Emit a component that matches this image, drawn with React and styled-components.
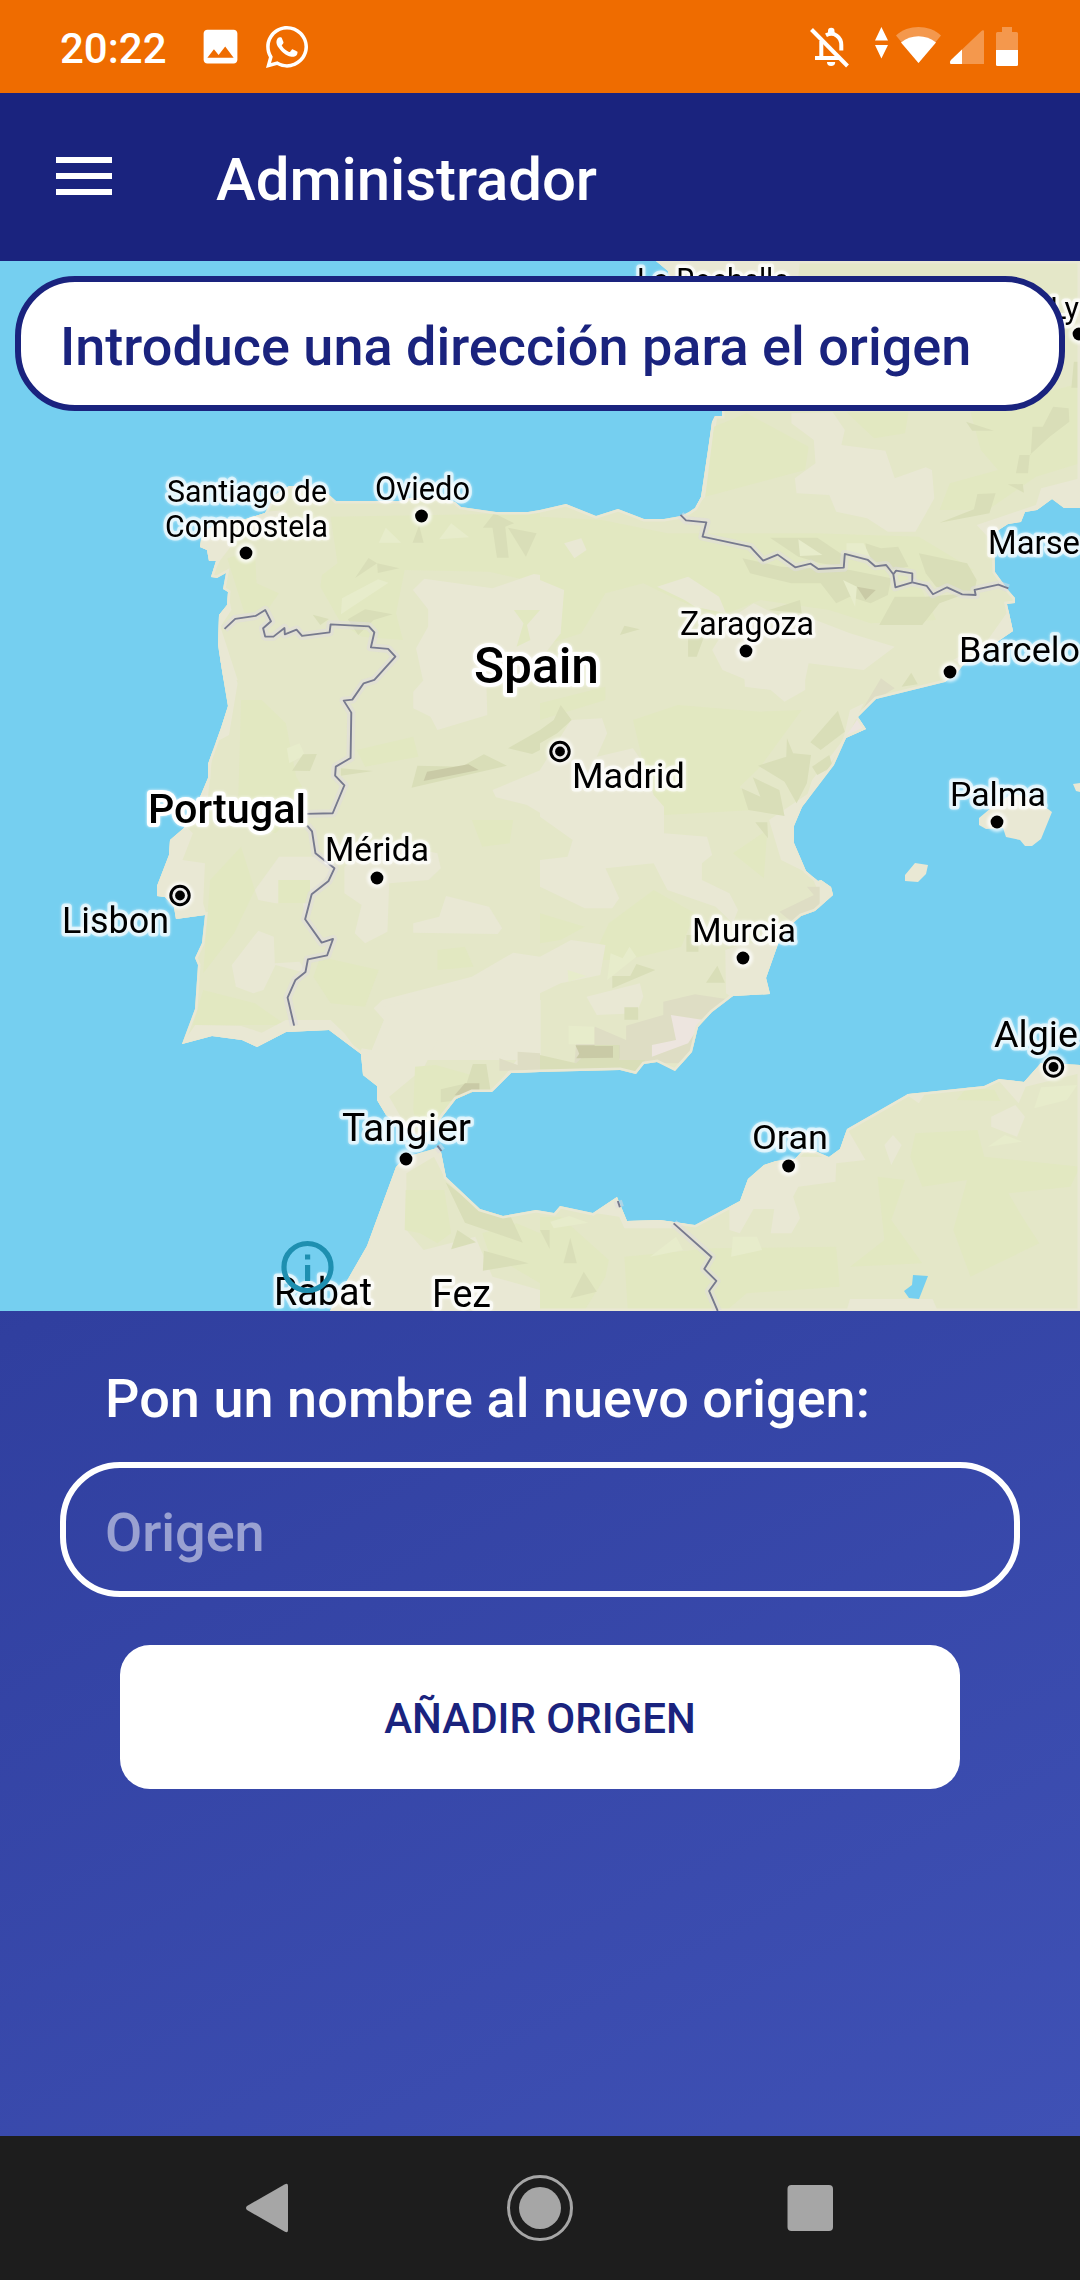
import React from "react";
import styled, { createGlobalStyle } from "styled-components";
import { FaWhatsapp } from "react-icons/fa";
import { MdImage } from "react-icons/md";

const GlobalStyle = createGlobalStyle`
  * { box-sizing: border-box; }
  body { margin: 0; font-family: Roboto, "Noto Sans", sans-serif; }
`;

const Screen = styled.div`
  width: 1080px;
  height: 2280px;
  display: flex;
  flex-direction: column;
  overflow: hidden;
  background: linear-gradient(153.18deg, #1a237e 0%, #303f9f 50%, #3f51b5 100%) 0 0 / 1080px 2136px no-repeat;
`;

const StatusBar = styled.header`
  height: 93px;
  flex: none;
  display: flex;
  align-items: flex-start;
  justify-content: space-between;
  padding: 0 60px;
  background: #ef6c00;
  color: #fff;
`;

const StatusLeft = styled.div`
  display: flex;
  align-items: center;
  height: 93px;
`;

const Clock = styled.span`
  width: 138px;
  font-size: 42px;
  font-weight: 500;
  line-height: 50px;
  padding-top: 4px;
`;

const ImageIcon = styled(MdImage)`
  font-size: 45px;
  margin-right: 20px;
`;

const ChatIcon = styled(FaWhatsapp)`
  font-size: 48px;
`;

const StatusIcons = styled.svg`
  width: 210px;
  height: 93px;
`;

const AppBar = styled.nav`
  height: 168px;
  flex: none;
  display: flex;
  align-items: center;
  padding-left: 56px;
  background: #1a237e;
`;

const MenuButton = styled.button`
  width: 56px;
  height: 38px;
  padding: 0;
  border: 0;
  background: none;
  display: flex;
  flex-direction: column;
  justify-content: space-between;
  margin-right: 104px;
  margin-bottom: 2px;
`;

const MenuLine = styled.span`
  height: 6px;
  background: #fff;
`;

const Title = styled.h1`
  margin: 0;
  font-size: 60px;
  font-weight: 500;
  line-height: 70px;
  letter-spacing: -0.1px;
  padding-top: 5px;
  color: #fff;
`;

const MapPanel = styled.section`
  position: relative;
  height: 1050px;
  flex: none;
  background: #75cff0;
`;

const MapCanvas = styled.svg`
  display: block;
  width: 1080px;
  height: 1050px;
`;

const Field = styled.input`
  height: 135px;
  border: 6px solid ${(p) => p.$tone};
  border-radius: 60px;
  background: ${(p) => p.$fill};
  color: ${(p) => p.$tone};
  padding: 5px 39px 0;
  font-family: Roboto, sans-serif;
  font-size: 54px;
  font-weight: 500;
  outline: none;
  &::placeholder {
    color: ${(p) => p.$hint};
    opacity: 1;
  }
`;

const SearchField = styled(Field)`
  position: absolute;
  top: 15px;
  left: 15px;
  width: 1050px;
`;

const Form = styled.form`
  flex: 1;
  display: flex;
  flex-direction: column;
  padding: 56px 60px 0;
`;

const Label = styled.label`
  padding-left: 45px;
  font-size: 54px;
  font-weight: 500;
  line-height: 64px;
  letter-spacing: 0.05px;
  color: #fff;
  margin-bottom: 31px;
`;

const AddButton = styled.button`
  height: 144px;
  margin: 48px 60px 0;
  border: 0;
  border-radius: 30px;
  background: #fff;
  color: #1a237e;
  font-family: Roboto, sans-serif;
  font-size: 42px;
  font-weight: 500;
  padding: 3px 0 0;
`;

const NavBar = styled.footer`
  height: 144px;
  flex: none;
  display: flex;
  align-items: center;
  justify-content: center;
  gap: 202px;
  background: #1d1d1d;
`;

const NavIcon = styled.svg`
  width: 68px;
  height: 68px;
  fill: #a6a6a6;
`;

const CityText = styled.text`
  font-family: Roboto, "Noto Sans", sans-serif;
  font-size: ${(p) => p.$size}px;
  font-weight: ${(p) => (p.$country ? 500 : 400)};
  fill: #000;
  stroke: ${(p) => (p.$country ? "#fff" : "rgba(255,255,255,0.62)")};
  stroke-width: ${(p) => (p.$country ? 8 : 7)}px;
  stroke-linejoin: round;
  paint-order: stroke;
  filter: drop-shadow(0 0 1.5px rgba(255, 255, 255, 0.8));
`;

const Halo = styled.circle`
  fill: rgba(255, 255, 255, 0.75);
  filter: blur(1.5px);
`;

const IBERIA =
  "M656 261L668 271L670 280L722 411L722 416L715 416L712 422L708 450L701 497L695 508L689 512L681 516L664 519L644 519L618 509L596 516L566 504L540 510L528 512L496 512L461 507L455 502L440 498L410 498L400 501L336 501L327 493L310 487L289 486L275 495L265 513L246 519L225 519L207 530L201 540L200 547L207 550L209 561L216 561L211 577L217 578L226 573L223 589L228 592L227 605L219 615L218 645L222 670L228 706L221 728L208 764L208 778L200 797L184 828L170 840L169 855L157 886L157 896L165 897L174 907L176 919L205 915L202 943L195 958L198 965L195 1009L182 1044L212 1036L242 1040L257 1047L286 1032L329 1030L361 1054L363 1075L377 1086L377 1100L386 1115L396 1123L418 1136L434 1128L442 1117L456 1099L472 1092L492 1092L511 1073L540 1072L620 1070L636 1074L644 1064L657 1062L675 1071L692 1052L698 1027L712 1012L733 996L770 994L766 978L778 944L793 923L801 916L815 911L833 895L831 887L821 880L818 881L806 871L794 843L794 826L802 807L834 765L846 738L866 729L858 717L876 699L945 682L957 673L963 665L1013 631L1007 604L1015 603L1015 598L1008 590L995 572L994 533L1008 524L1021 522L1025 512L1037 510L1052 499L1064 508L1080 508L1080 261Z";
const AFRICA =
  "M330 1311L348 1279L367 1246L396 1167L406 1157L437 1148L441 1152L446 1177L480 1209L503 1216L536 1210L554 1213L560 1206L593 1213L617 1197L627 1221L660 1220L695 1225L740 1201L748 1179L764 1165L776 1161L795 1159L803 1150L815 1151L829 1157L840 1149L847 1129L908 1094L984 1086L999 1079L1024 1082L1041 1063L1080 1065L1080 1311Z";
const ISLANDS =
  "M979 818L991 808L1013 793L1036 800L1052 812L1041 839L1032 846L1025 846L1020 840L1006 837L1003 828L986 829L979 825Z M905 875L915 863L928 865L926 874L918 882L905 881Z M1073 784L1080 783L1080 792L1076 791Z";
const LAKE = "M913 1275L928 1276L919 1299L909 1298L904 1291L912 1285Z";

const SAND = "#e9e8d4";
const GREEN = "#e2e8c1";
const PALE = "#e7eccb";
const HILL = "#d9deb8";
const RIDGE = "#c9caa6";
const DUSK = "#deddc4";
const ROSE = "#ede5df";

const TILES = [
  {
    x: 0,
    y: 250,
    shapes: [
      [SAND, "560,805 830,780 780,830 700,850 640,930 610,990 560,990"],
      [GREEN, "960,800 1568,790 1568,1000 1420,965 1175,960 1150,1090 1170,1170 1050,1160 990,1120 930,1010 935,975 980,940"],
      [GREEN, "660,925 740,900 745,1000 810,1030 770,1090 710,1090"],
      [SAND, "1199,1020 1232,986 1430,1015 1550,972 1570,975 1570,1290 1228,1290 1208,1195 1243,1130 1243,1078"],
      [SAND, "630,1095 661,1020 672,1080 640,1130 690,1290 640,1290"],
      [GREEN, "1492,1080 1568,1080 1530,1125 1540,1170 1500,1190 1520,1120"],
      [PALE, "993,1045 1098,988 1128,998 990,1093"],
      [PALE, "1120,833 1165,878 1100,878"],
      [PALE, "1310,820 1362,862 1275,868"],
      [HILL, "1095,940 1160,955 1097,969"],
      [HILL, "1070,924 1095,940 1031,984"],
      [HILL, "1217,825 1230,878 1198,878"],
      [HILL, "1435,790 1493,820 1467,830 1477,923 1443,923 1430,833 1402,833"],
      [HILL, "1475,833 1558,850 1527,920"],
      [HILL, "908,1094 955,1107 930,1125"],
      [HILL, "1060,1078 1140,1093 1085,1110 1040,1155 1010,1108"],
    ],
  },
  {
    x: 540,
    y: 250,
    shapes: [
      [SAND, "330,33 755,33 750,80 330,80"],
      [SAND, "500,500 515,497 480,740 450,773 434,787 467,740"],
      [GREEN, "505,530 600,490 780,590 770,660 480,740"],
      [GREEN, "890,487 1070,487 1060,550 970,565"],
      [SAND, "730,490 850,487 885,540 875,585 1003,602 1030,685 1120,652 1138,660 1145,745 1115,800 1090,845 1010,845 950,805 860,785 840,735 745,730 740,685 800,640 795,570 730,520"],
      [GREEN, "1250,487 1568,400 1568,640 1440,680 1300,780 1160,780 1190,700 1330,660 1280,600"],
      [GREEN, "0,800 180,810 370,850 800,850 1100,860 1260,960 1100,1000 1150,1110 960,1120 840,1080 640,1050 520,1100 400,1050 300,1000 190,1030 120,1150 0,1190"],
      [SAND, "70,880 120,865 135,900 100,925"],
      [SAND, "0,990 70,1020 60,1150 0,1230"],
      [SAND, "1268,825 1440,765 1455,715 1568,685 1568,773 1522,773 1488,748 1445,780 1408,787 1397,815 1360,822 1320,850 1320,925 1300,860"],
      [SAND, "340,1010 430,980 520,1040 540,1090 450,1070 420,1050"],
      [SAND, "560,1100 620,1060 700,1100 800,1110 900,1150 1030,1190 940,1260 780,1240 770,1290 600,1290 530,1260 500,1200"],
      [SAND, "1375,1060 1385,1143 1228,1245 1200,1230 1300,1170"],
      [HILL, "1490,470 1535,475 1537,515 1480,560 1422,615 1417,670 1382,670 1392,615 1425,615 1430,530 1460,530"],
      [HILL, "1237,515 1318,542 1255,542"],
      [HILL, "1270,732 1323,730 1305,790 1160,818 1260,778"],
      [HILL, "1550,335 1568,335 1568,413 1543,413"],
      [HILL, "1358,703 1402,702 1405,728"],
      [HILL, "668,863 805,863 880,915 880,950 815,940 750,920"],
      [HILL, "588,925 700,950 900,960 1020,985 1010,1035 960,1060 900,1040 860,1060 815,1000 730,1000 610,970"],
      [HILL, "1100,910 1240,940 1268,990 1260,1035 1150,1010 1120,970"],
      [HILL, "985,1125 1030,1040 1120,1040 1240,1030 1160,1060 1110,1125"],
      [HILL, "945,880 990,895 1040,890 1070,950 1010,960 950,920"],
      [PALE, "750,868 820,915 755,918"],
      [PALE, "880,990 920,1010 915,1070"],
      [PALE, "890,880 940,880 960,925 890,905"],
      [RIDGE, "920,1010 975,1020 945,1050"],
      [HILL, "755,1050 760,1090 665,1080"],
      [HILL, "245,1127 290,1138 232,1155"],
      [HILL, "430,1160 480,1150 455,1220 430,1220"],
    ],
  },
  {
    x: 0,
    y: 660,
    shapes: [
      [SAND, "630,0 665,0 690,70 665,225 620,250 603,420 560,420 590,312 650,138"],
      [SAND, "536,495 560,520 530,600 595,610 590,730 600,766 510,785 450,707 450,678 480,585 485,540"],
      [GREEN, "700,120 760,120 830,190 860,350 900,420 800,520 690,480"],
      [GREEN, "610,660 700,560 740,690 680,820 590,940"],
      [GREEN, "590,990 740,1030 830,1095 760,1095 560,1095"],
      [GREEN, "930,890 1100,930 1060,1040 960,1030 910,950"],
      [GREEN, "1035,270 1200,230 1215,290 1060,320"],
      [GREEN, "1370,480 1490,480 1480,550 1400,560"],
      [GREEN, "1270,870 1350,860 1375,920 1270,930"],
      [SAND, "740,690 810,590 915,590 970,625 905,703 886,778 880,730 800,730 750,720"],
      [GREEN, "808,660 900,660 900,730 808,730"],
      [SAND, "673,915 750,812 795,830 798,910 870,905 890,940 800,915 765,990 735,1000 685,980"],
      [SAND, "1200,95 1230,60 1225,0 1410,0 1415,165 1270,210 1250,170 1200,145"],
      [SAND, "1130,670 1245,660 1280,625 1270,580 1130,550 1000,620 1000,700 1050,735 1030,820 1060,850 1125,815"],
      [SAND, "1200,790 1275,770 1295,708 1420,740 1458,805 1445,822 1200,818"],
      [SAND, "1430,390 1570,330 1570,460 1530,435 1440,412"],
      [SAND, "1085,1045 1110,1020 1370,950 1490,878 1568,890 1568,1200 1040,1200 1050,1165 1080,1170 1115,1080"],
      [SAND, "528,1152 567,1095 700,1098 760,1118 830,1080 960,1080 1000,1120 1050,1190 957,1120 830,1126 747,1171"],
      [PALE, "833,265 870,250 885,285 840,310"],
      [HILL, "880,283 920,282 900,333 848,332"],
      [HILL, "990,325 1083,333 990,347"],
      [HILL, "1212,317 1340,320 1405,283 1472,317 1195,383"],
      [RIDGE, "1360,313 1390,330 1230,363 1240,335"],
      [HILL, "1475,265 1568,210 1568,270 1545,282"],
    ],
  },
  {
    x: 540,
    y: 660,
    shapes: [
      [GREEN, "270,180 400,135 640,155 760,150 640,320 580,380 620,450 360,465 330,405 300,310"],
      [GREEN, "560,580 660,510 650,655"],
      [GREEN, "200,790 330,690 450,760 410,860 250,900 150,900"],
      [GREEN, "0,130 190,80 190,120 0,180"],
      [GREEN, "0,760 130,800 60,840 0,850"],
      [SAND, "0,330 90,180 180,175 195,220 165,290 270,265 300,310 330,405 360,440 360,520 485,530 500,585 470,610 470,660 550,700 575,750 560,790 510,740 370,690 330,610 190,625 230,715 210,745 130,745 0,680 0,600 80,590 95,540 0,470"],
      [SAND, "590,0 770,0 770,90 710,125 670,90 595,80"],
      [SAND, "0,890 90,840 190,855 175,945 60,970 0,1000"],
      [SAND, "135,1010 290,970 300,1010 280,1060 165,1065"],
      [SAND, "538,870 600,850 700,853 668,955 677,1003 560,1015 540,1000"],
      [SAND, "665,480 780,400 737,498 739,550 782,642 700,600"],
      [SAND, "765,440 850,300 890,235 940,130 900,150 880,240 790,360"],
      [SAND, "790,650 850,670 860,706 800,762 810,700"],
      [DUSK, "358,1025 450,1003 560,1020 480,1090 440,1170 420,1210 100,1210 105,1150 160,1100 250,1140 250,1097 358,1065"],
      [DUSK, "695,755 795,705 775,680 812,680 812,745 757,778 735,790"],
      [PALE, "83,1097 158,1100 158,1153 83,1153"],
      [PALE, "205,880 240,895 260,860 280,890 195,960"],
      [PALE, "80,930 135,948 83,965"],
      [ROSE, "380,1065 475,1080 430,1150 325,1190 325,1155 395,1140"],
      [ROSE, "885,235 925,172 950,208"],
      [RIDGE, "103,1156 230,1156 230,1195 120,1195"],
      [HILL, "0,250 0,210 40,180 60,135 92,180 50,220"],
      [HILL, "633,317 715,290 717,235 735,280 787,285 775,370 745,430 710,365"],
      [HILL, "785,247 865,152 885,215 815,270"],
      [HILL, "790,320 840,285 850,320 805,345"],
      [HILL, "585,385 640,410 618,352 695,390 710,468 605,450"],
      [HILL, "625,487 660,487 662,535"],
      [DUSK, "935,150 990,55 1030,85 960,128"],
      [HILL, "1050,80 1078,38 1097,73"],
      [HILL, "425,825 460,825 460,875 425,875"],
      [HILL, "280,912 335,930 210,985 210,948 262,948"],
      [HILL, "515,917 537,968 482,968"],
      [HILL, "245,1042 285,1042 285,1079 245,1079"],
    ],
  },
  {
    x: 0,
    y: 1000,
    shapes: [
      [SAND, "1040,162 1080,150 1115,60 1110,20 1200,0 1570,0 1570,220 1430,275 1500,180 1440,160 1280,100 1230,205 1130,290 1180,380 1120,365 1080,300 1085,258 1044,224"],
      [GREEN, "1205,200 1265,195 1420,240 1390,275 1325,296 1262,385 1215,405 1200,330"],
      [HILL, "1373,192 1412,192 1427,290 1280,307 1280,268 1355,250"],
      [RIDGE, "1350,250 1392,250 1392,282 1320,286"],
      [DUSK, "1450,175 1503,195 1503,155 1568,160 1568,212 1450,212"],
      [SAND, "950,933 1055,738 1140,490 1280,440 1300,550 1260,470 1180,520 1180,690 1230,750 1380,710 1430,830 1568,870 1568,933"],
      [GREEN, "1178,570 1290,570 1310,700 1270,730 1220,700 1175,690"],
      [GREEN, "1400,700 1500,670 1568,700 1568,850 1420,760"],
      [HILL, "1294,547 1395,630 1483,650 1518,728 1350,668"],
      [HILL, "1328,690 1382,727 1310,748"],
      [HILL, "1405,752 1535,790 1402,812"],
    ],
  },
  {
    x: 540,
    y: 1000,
    shapes: [
      [HILL, "0,165 105,190 160,135 230,135 230,180 305,180 278,222 232,210 0,215"],
      [RIDGE, "105,175 130,138 212,138 212,173"],
      [GREEN, "0,650 60,650 200,780 190,830 130,930 0,933"],
      [GREEN, "245,770 500,745 860,740 870,860 600,880 540,933 255,933"],
      [GREEN, "1090,400 1270,390 1290,470 1568,500 1540,560 1360,580 1400,650 1450,730 1250,830 1200,690 1240,540 1110,560 1075,470"],
      [GREEN, "980,530 1060,540 1020,660 1110,790 900,800 1000,720"],
      [GREEN, "1210,300 1240,262 1320,270 1337,303"],
      [SAND, "550,615 595,537 650,490 740,470 840,471 893,388 945,480 860,490 858,545 750,560 735,590 755,655 730,700 670,700 680,627 620,627 580,700 550,690"],
      [SAND, "900,897 1140,897 1155,933 890,933"],
      [SAND, "1330,240 1407,240 1455,185 1568,190 1568,220 1410,260 1390,310"],
      [SAND, "1310,350 1380,315 1408,350 1385,410 1310,380"],
      [SAND, "1000,435 1025,405 1050,435 1020,495"],
      [SAND, "1060,281 1120,278 1100,310"],
      [SAND, "153,638 223,585 252,655 430,665 400,685 245,685 230,650"],
      [PALE, "1300,440 1350,405 1400,425"],
      [PALE, "560,710 630,710 645,750 555,770"],
      [PALE, "320,770 395,710 415,750"],
      [PALE, "30,665 85,648 140,668 40,685"],
      [PALE, "1435,325 1455,262 1560,255 1530,300"],
      [HILL, "88,713 107,790 68,790"],
      [HILL, "127,815 165,875 88,895"],
      [HILL, "0,690 28,690 28,747"],
    ],
  },
];

const BORDERS = [
  [0, 250, "652,1137 683,1107 742,1098 770,1080 787,1114 764,1135 770,1160 794,1160 826,1134 827,1153 861,1139 877,1158 957,1147 960,1123 1071,1129 1087,1147 1077,1192 1127,1197 1148,1220 1087,1290 1056,1300 1023,1349 998,1352 1020,1388 1018,1524 975,1550 973,1577 1000,1606 966,1690 885,1692"],
  [0, 660, "892,497 906,514 916,580 971,625 954,663 905,703 886,778 934,848 967,837 950,886 894,898 887,936 858,960 835,1013 854,1097"],
  [540, 250, "408,795 424,811 483,817 472,860 611,891 648,932 690,914 741,952 786,941 808,957 882,953 885,912 952,930 973,949 1005,945 1026,973 1034,962 1081,970 1081,997 1032,1012 1026,973"],
  [540, 250, "1081,997 1123,1008 1141,1033 1182,1012 1226,1033 1265,1035 1262,1020 1331,1004 1360,1015"],
  [540, 1000, "388,670 498,771 477,807 512,843 491,873 516,933"],
  [0, 1000, "1270,437 1282,453"],
  [540, 1000, "226,603 232,622"],
];

// name, left, baseline, width, font size, country flag
const LABELS = [
  ["La Rochelle", 637, 292, 152, 33],
  ["Ly", 1050, 319, 29, 32],
  ["Santiago de", 167, 502, 160, 32],
  ["Compostela", 165, 537, 163, 32],
  ["Oviedo", 375, 500, 95, 33],
  ["Marse", 988, 554, 92, 33.5],
  ["Zaragoza", 680, 635, 134, 33.5],
  ["Barcelo", 959, 662, 121, 35],
  ["Spain", 474, 683, 125, 50, true],
  ["Madrid", 572, 788, 113, 35],
  ["Portugal", 148, 823, 158, 41, true],
  ["Palma", 950, 806, 96, 33],
  ["Mérida", 325, 861, 104, 33],
  ["Lisbon", 62, 933, 107, 36],
  ["Murcia", 692, 942, 104, 34],
  ["Algie", 994, 1047, 84, 37],
  ["Tangier", 342, 1141, 129, 38],
  ["Oran", 752, 1149, 76, 34],
  ["Rabat", 274, 1305, 98, 38],
  ["Fez", 432, 1307, 59, 38],
];

const DOTS = [
  [246, 553], [421.5, 516], [746, 651], [950, 672], [377, 878], [997, 822],
  [743, 958], [788.6, 1166], [406, 1159], [1079, 334],
];
const CAPITALS = [[560, 751.5], [180, 895.5], [1053.5, 1067]];

const tileTransform = (x, y) => `translate(${x} ${y}) scale(0.3444 0.3333)`;

function IberiaMap() {
  return (
    <MapCanvas viewBox="0 261 1080 1050">
      <defs>
        <clipPath id="land">
          <path d={IBERIA} />
          <path d={AFRICA} />
        </clipPath>
      </defs>
      <path d={`${IBERIA} ${AFRICA}`} fill="#e4e7c8" />
      <path d={ISLANDS} fill={SAND} />
      <g clipPath="url(#land)">
        {TILES.map((tile, t) => (
          <g key={t} transform={tileTransform(tile.x, tile.y)}>
            {tile.shapes.map(([fill, points], i) => (
              <polygon key={i} points={points} fill={fill} />
            ))}
          </g>
        ))}
        <path d={`${IBERIA} ${AFRICA}`} fill="none" stroke={SAND} strokeWidth="5" />
      </g>
      <path d={LAKE} fill="#75cff0" />
      {BORDERS.map(([x, y, points], i) => (
        <g key={i} transform={tileTransform(x, y)} fill="none" strokeLinejoin="round">
          <polyline points={points} stroke="#dfdcdf" strokeOpacity="0.5" strokeWidth="24" />
          <polyline points={points} stroke="#777a8e" strokeWidth="5.5" />
        </g>
      ))}
      {DOTS.map(([x, y], i) => (
        <g key={i}>
          <Halo cx={x} cy={y} r="10" />
          <circle cx={x} cy={y} r="6.4" />
        </g>
      ))}
      {CAPITALS.map(([x, y], i) => (
        <g key={i}>
          <Halo cx={x} cy={y} r="13.5" />
          <circle cx={x} cy={y} r="9.2" fill="#eee" stroke="#000" strokeWidth="3" />
          <circle cx={x} cy={y} r="4.9" />
        </g>
      ))}
      {LABELS.map(([name, x, y, width, size, country]) => (
        <CityText key={name} x={x} y={y} textLength={width} lengthAdjust="spacingAndGlyphs" $size={size} $country={country}>
          {name}
        </CityText>
      ))}
      <g fill="#1e8fb0">
        <circle cx="307.5" cy="1267" r="23.5" fill="none" stroke="#1e8fb0" strokeWidth="5.2" />
        <rect x="305" y="1254.5" width="5.2" height="5" />
        <rect x="305" y="1265" width="5.2" height="16" />
      </g>
    </MapCanvas>
  );
}

function SystemIcons() {
  return (
    <StatusIcons viewBox="810 0 210 93" fill="#fff">
      <g fill="none" stroke="#fff" strokeWidth="4">
        <path d="M811.5 29.5L847.5 66" />
        <path d="M815 58H840" />
        <path d="M821.3 41V57" />
        <path d="M826 35.3C834 31 841.3 37 841.3 45V50.5" />
      </g>
      <path d="M828 34V31A3.2 3.2 0 0 1 834.5 31V34Z" />
      <path d="M827 62H835.2A4.1 4.1 0 0 1 827 62Z" />
      <path d="M875 40.5L881.4 27L888 40.5ZM875 45H888L881.4 58.5Z" />
      <path d="M896 35.5C908 24.3 929 24.3 941 35.5L918.5 63Z" fillOpacity="0.3" />
      <path d="M901 42.5C911 34 926 34 936 42.5L918.5 63Z" />
      <path d="M950.5 64Q949 62 951 60L982 30.5Q984 29.5 984 31.5V64Z" fillOpacity="0.3" />
      <path d="M950.5 64Q949 62 951 60L962 49.5V64Z" />
      <path d="M1002 27H1012V32H1016.5Q1018 32 1018 33.5V50H996V33.5Q996 32 997.5 32H1002Z" fillOpacity="0.3" />
      <path d="M996 50H1018V64.5Q1018 66 1016.5 66H997.5Q996 66 996 64.5Z" />
    </StatusIcons>
  );
}

export default function App() {
  return (
    <>
      <GlobalStyle />
      <Screen>
        <StatusBar>
          <StatusLeft>
            <Clock>20:22</Clock>
            <ImageIcon />
            <ChatIcon />
          </StatusLeft>
          <SystemIcons />
        </StatusBar>
        <AppBar>
          <MenuButton aria-label="Menú">
            <MenuLine />
            <MenuLine />
            <MenuLine />
          </MenuButton>
          <Title>Administrador</Title>
        </AppBar>
        <MapPanel>
          <IberiaMap />
          <SearchField $tone="#1a237e" $fill="#fff" $hint="#1a237e" placeholder="Introduce una dirección para el origen" />
        </MapPanel>
        <Form>
          <Label htmlFor="origen">Pon un nombre al nuevo origen:</Label>
          <Field id="origen" $tone="#fff" $fill="transparent" $hint="rgba(255,255,255,0.5)" placeholder="Origen" />
          <AddButton type="button">AÑADIR ORIGEN</AddButton>
        </Form>
        <NavBar>
          <NavIcon viewBox="0 0 68 68">
            <path d="M48.5 10.5Q52 8.5 52 12V56Q52 59.5 48.5 57.5L11 36Q9 34 11 32Z" />
          </NavIcon>
          <NavIcon viewBox="0 0 68 68">
            <circle cx="34" cy="34" r="31.5" fill="none" stroke="#a6a6a6" strokeWidth="3" />
            <circle cx="34" cy="34" r="21" />
          </NavIcon>
          <NavIcon viewBox="0 0 68 68">
            <rect x="11.5" y="11" width="45.5" height="46" rx="4" />
          </NavIcon>
        </NavBar>
      </Screen>
    </>
  );
}
